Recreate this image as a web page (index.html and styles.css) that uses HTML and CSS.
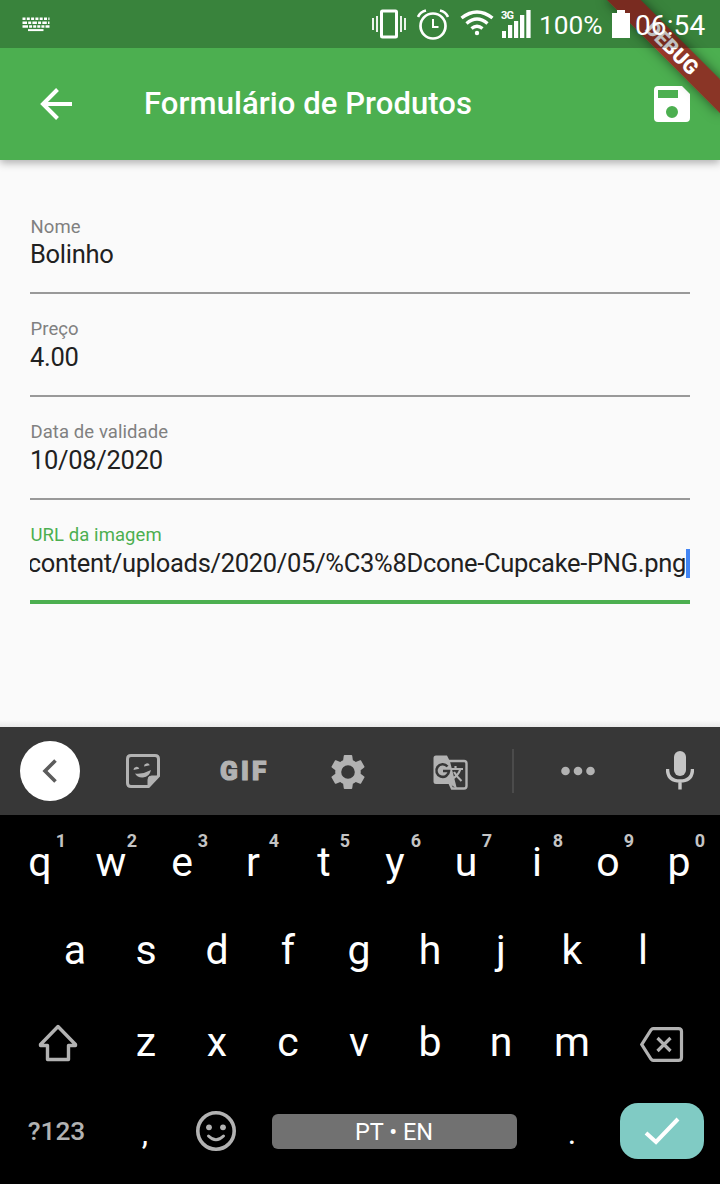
FILE: index.html
```html
<!DOCTYPE html>
<html lang="pt">
<head>
<meta charset="utf-8">
<title>Formulário de Produtos</title>
<link rel="stylesheet" href="styles.css">
</head>
<body>
<div class="screen">
  <header class="top">
    <div class="debug"><span>DEBUG</span></div>
    <div class="status">
      <svg class="s-kbd" width="28" height="15" viewBox="0 0 28 15" stroke="#fff" stroke-width="2.6" fill="none"><path d="M.5 1.8H27.500" stroke-dasharray="3 1.3"/><path d="M.5 5.700H27.500" stroke-dasharray="4.500 1.200 3 1.200"/><path d="M.5 9.500H27.500" stroke-dasharray="5.500 1.100 3 1.100 3 1.100 3 1.100 3 1.100 5.500"/><path d="M6 13.100H21.500" stroke-width="2"/></svg>
      <svg class="s-vib" width="34" height="30" viewBox="0 0 34 30" fill="none" stroke="#fff"><rect x="9.500" y="2" width="15" height="26" rx="1" stroke-width="3"/><path d="M1 9V21M5 7V23M29 7V23M33 9V21" stroke-width="1.800"/></svg>
      <svg class="s-alarm" width="32" height="31" viewBox="0 0 32 31" fill="none" stroke="#fff"><circle cx="16" cy="17" r="12.500" stroke-width="2.700"/><path d="M16 10V18H21.500" stroke-width="2"/><path d="M1 8Q3 3 9 1.500M31 8Q29 3 23 1.500" stroke-width="2.600"/></svg>
      <svg class="s-wifi" width="34" height="26" viewBox="0 0 34 26" fill="none" stroke="#fff" stroke-width="3.400"><path d="M1.500 8Q17-4 32.500 8M6.500 13.500Q17 4.500 27.500 13.500M11.500 18.500Q17 14 22.500 18.500"/><circle cx="17" cy="23" r="2.200" fill="#fff" stroke="none"/></svg>
      <div class="signal"><span>3G</span><svg width="29" height="28" viewBox="0 0 29 28" fill="#fff"><path d="M0 21h4v7H0zM6 15h4.200v13H6zM12 11h4.200v17H12zM18 5h4.300v23H18zM24.300 0h4.300v28h-4.300z"/></svg></div>
      <span class="pct">100%</span>
      <svg class="s-bat" width="18" height="28" viewBox="0 0 18 28"><path d="M5 0h8v3h5v25H0V3h5z" fill="#fff"/></svg>
      <span class="time">06:54</span>
    </div>
    <div class="appbar">
      <svg class="back" width="32" height="32" viewBox="0 0 32 32" fill="none" stroke="#fff" stroke-width="4"><path d="M32 16H3.500M17.500 1.500L3 16L17.500 30.500"/></svg>
      <h1>Formulário de Produtos</h1>
      <svg class="save" width="36" height="36" viewBox="0 0 36 36"><path fill="#fff" fill-rule="evenodd" d="M4 0H28L36 8V32Q36 36 32 36H4Q0 36 0 32V4Q0 0 4 0ZM4 4V12H24V4ZM18 20A6 6 0 1 0 18 32A6 6 0 1 0 18 20Z"/></svg>
    </div>
  </header>
  <main class="form">
    <div class="field"><label>Nome</label><div class="value">Bolinho</div></div>
    <div class="field"><label>Preço</label><div class="value">4.00</div></div>
    <div class="field"><label>Data de validade</label><div class="value">10/08/2020</div></div>
    <div class="field focus"><label>URL da imagem</label><div class="value"><span>content/uploads/2020/05/%C3%8Dcone-Cupcake-PNG.png</span><i class="caret"></i></div></div>
  </main>
  <div class="tools">
    <div class="collapse"><svg width="16" height="24" viewBox="0 0 16 24" fill="none" stroke="#5c5c5c" stroke-width="3.600"><path d="M13.500 1.500L3 12L13.500 22.500"/></svg></div>
    <svg class="t-sticker" width="34" height="34" viewBox="0 0 34 34" fill="none" stroke="#b2b2b2" stroke-width="3"><path d="M5 1.500H29Q32.500 1.500 32.500 5V22L22.500 32.500H5Q1.500 32.500 1.500 29V5Q1.500 1.500 5 1.500Z"/><path d="M22 32V25.500Q22 22 25.500 22H32L22.500 32Z" fill="#b2b2b2" stroke-width="1"/><g fill="#b2b2b2" stroke="none"><path d="M7.500 16A3 3 0 0 1 13.300 14.800ZM18 12.500A3 3 0 0 1 23.800 11.300Z"/><path d="M9 19.500Q17 20.500 25 16Q23.500 23 17 23.500Q11.500 24 9 19.500Z"/></g></svg>
    <span class="gif">GIF</span>
    <svg class="t-gear" width="34" height="34" viewBox="2 2 20 20"><path fill="#b2b2b2" d="M19.430 12.980c.04-.32.07-.64.07-.98s-.03-.66-.07-.98l2.110-1.650c.19-.15.24-.42.12-.64l-2-3.460c-.12-.22-.39-.3-.61-.22l-2.490 1c-.52-.4-1.080-.73-1.690-.98l-.38-2.650C14.460 2.180 14.250 2 14 2h-4c-.25 0-.46.18-.49.42l-.38 2.650c-.61.25-1.170.59-1.690.98l-2.490-1c-.23-.09-.49 0-.61.22l-2 3.460c-.13.22-.07.49.12.64l2.110 1.650c-.04.32-.07.65-.07.98s.03.66.07.98l-2.110 1.650c-.19.15-.24.42-.12.64l2 3.460c.12.22.39.3.61.22l2.490-1c.52.4 1.080.73 1.690.98l.38 2.650c.03.24.24.42.49.42h4c.25 0 .46-.18.49-.42l.38-2.650c.61-.25 1.170-.59 1.690-.98l2.490 1c.23.09.49 0 .61-.22l2-3.460c.12-.22.07-.49-.12-.64zM12 16a4 4 0 1 1 0-8a4 4 0 0 1 0 8z"/></svg>
    <svg class="t-trans" width="35" height="35" viewBox="0 0 35 35" fill="none"><path d="M3 .5H14L17 6.500L24 34L17 29H3Q.5 29 .5 26.500V3Q.5.500 3 .5Z" fill="#b2b2b2"/><path d="M16 6H31Q33.500 6 33.500 8.500V31Q33.500 33.500 31 33.500H19L16 27" stroke="#b2b2b2" stroke-width="2.400"/><path d="M14.500 11.500A6.300 6.300 0 1 0 16 16H10" stroke="#373737" stroke-width="2.600"/><path d="M18 14H30M22.500 11V14M27.500 14Q25 21 19 24M21 17Q24 22 28.500 26" stroke="#b2b2b2" stroke-width="2.200"/></svg>
    <i class="sep"></i>
    <svg class="t-dots" width="34" height="10" viewBox="0 0 34 10" fill="#b2b2b2"><circle cx="4.500" cy="5" r="4.300"/><circle cx="17" cy="5" r="4.300"/><circle cx="29.500" cy="5" r="4.300"/></svg>
    <svg class="t-mic" width="28" height="40" viewBox="0 0 28 40"><rect x="8" y="1" width="12" height="25" rx="6" fill="#c5c5c5"/><path d="M1.500 19Q1.500 31 14 31Q26.500 31 26.500 19M14 31V39.500" fill="none" stroke="#c5c5c5" stroke-width="3.400"/></svg>
  </div>
  <div class="keys">
    <div class="row r1"><b>q<sup>1</sup></b><b>w<sup>2</sup></b><b>e<sup>3</sup></b><b>r<sup>4</sup></b><b>t<sup>5</sup></b><b>y<sup>6</sup></b><b>u<sup>7</sup></b><b>i<sup>8</sup></b><b>o<sup>9</sup></b><b>p<sup>0</sup></b></div>
    <div class="row r2"><b>a</b><b>s</b><b>d</b><b>f</b><b>g</b><b>h</b><b>j</b><b>k</b><b>l</b></div>
    <div class="row r3">
      <b class="wide"><svg width="40" height="38" viewBox="0 0 40 38" fill="none" stroke="#b2b2b2" stroke-width="3.400" stroke-linejoin="round"><path d="M20 2.500L37.500 20.500V21.500H30.500V35.500H9.500V21.500H2.500V20.500Z"/></svg></b>
      <b>z</b><b>x</b><b>c</b><b>v</b><b>b</b><b>n</b><b>m</b>
      <b class="wide back-key"><svg width="44" height="35" viewBox="0 0 44 35" fill="none" stroke="#b2b2b2" stroke-width="3.200"><path d="M13 1.600H38.500Q41.500 1.600 41.500 4.500V30.500Q41.500 33.400 38.500 33.400H13Q12 33.400 11 32L1.800 17.500L11 3Q12 1.600 13 1.600Z"/><path d="M17.500 11L30.500 24M30.500 11L17.500 24"/></svg></b>
    </div>
    <div class="row r4">
      <b class="wide sym">?123</b><b class="punct">,</b>
      <b><svg width="40" height="40" viewBox="0 0 40 40" fill="none" stroke="#b2b2b2" stroke-width="3.600"><circle cx="20" cy="20" r="18.200"/><path d="M12.500 25Q20 32.500 27.500 25" stroke-width="3" stroke-linecap="round"/><g fill="#b2b2b2" stroke="none"><circle cx="13" cy="16.300" r="2.900"/><circle cx="27" cy="16.300" r="2.900"/></g></svg></b>
      <span class="space">PT • EN</span><b class="punct">.</b>
      <span class="enter"><svg width="36" height="28" viewBox="0 0 36 28" fill="none" stroke="#fff" stroke-width="4"><path d="M2 16L12 25L34 2"/></svg></span>
    </div>
  </div>
</div>
</body>
</html>
```
FILE: styles.css
```css
* { box-sizing: border-box; }
body { margin: 0; font-family: Roboto, sans-serif; }
svg { display: block; flex: none; }
.screen { width: 720px; height: 1184px; display: flex; flex-direction: column; background: #fafafa; overflow: hidden; }

.top { position: relative; height: 160px; background: #4caf50; box-shadow: 0 3px 8px rgba(0,0,0,.3); }
.debug { position: absolute; inset: 0; overflow: hidden; height: 160px; }
.debug span { position: absolute; left: 640px; top: 56px; width: 160px; height: 24px; line-height: 24px; text-align: center; transform-origin: 80px -56px; transform: rotate(45deg); background: linear-gradient(90deg, #a23a2b 40%, #8a3526 62%); box-shadow: 0 0 12px rgba(0,0,0,.5); color: #fff; font-size: 20.4px; font-weight: 900; }
.status { position: relative; height: 48px; display: flex; align-items: flex-start; background: rgba(0,0,0,.25); color: #fff; }
.s-kbd { margin: 17px 0 0 22px; }
.s-vib { margin: 9px 0 0 322px; }
.s-alarm { margin: 9px 0 0 11px; }
.s-wifi { margin: 10px 0 0 11px; }
.signal { position: relative; margin: 10px 0 0 8px; }
.signal span { position: absolute; left: -1px; top: 0; font-size: 11px; line-height: 12px; font-weight: 700; letter-spacing: -.8px; }
.pct { margin: 10px 0 0 8px; width: 64px; font-size: 26.300px; line-height: 30px; }
.s-bat { margin: 10px 0 0 9px; }
.time { margin: 11px 0 0 5px; font-size: 28px; line-height: 30px; white-space: nowrap; letter-spacing: .1px; }
.appbar { height: 112px; padding: 0 30px 0 40px; display: flex; align-items: center; }
.appbar h1 { flex: 1; margin: 0 0 0 72px; color: #fff; font-size: 31px; line-height: 40px; font-weight: 500; letter-spacing: .08px; }

.form { flex: none; height: 567px; padding: 51px 30px 0; background: linear-gradient(#fafafa, #fafafa 560px, #e9e9e9); }
.field { height: 103px; display: flex; flex-direction: column; }
.field label { margin: 5px 0 0 .5px; font-size: 18.500px; line-height: 22px; color: #808080; letter-spacing: .08px; }
.field + .field label { margin-top: 4px; margin-bottom: 1px; }
.value { display: flex; height: 56px; padding-top: 1px; border-bottom: 2px solid #999; font-size: 25.500px; line-height: 30px; color: #212121; overflow: hidden; white-space: nowrap; letter-spacing: -.3px; }
.focus label { color: #4caf50; }
.focus .value { height: 57px; justify-content: flex-end; border-bottom: 4px solid #4caf50; }
.caret { flex: none; width: 4px; height: 29px; margin-top: 1px; background: #4285f4; }

.tools { flex: none; height: 88px; background: #373737; display: flex; align-items: center; }
.collapse { width: 60px; height: 60px; margin-left: 20px; border-radius: 50%; background: #fff; display: flex; align-items: center; justify-content: center; }
.t-sticker { margin-left: 46px; }
.gif { margin-left: 60px; width: 48px; color: #b2b2b2; font: 900 26px/30px Roboto, sans-serif; letter-spacing: 3.200px; -webkit-text-stroke: 1.200px #b2b2b2; }
.t-gear { margin-left: 63px; margin-top: 2px; }
.t-trans { margin-left: 68px; margin-top: 3px; }
.sep { width: 2px; height: 44px; margin-left: 44px; background: #4b4b4b; }
.t-dots { margin-left: 47px; }
.t-mic { margin-left: 71px; margin-bottom: 2px; }

.keys { flex: 1; background: #000; color: #fff; }
.row { display: flex; align-items: center; padding: 0 4.500px; }
.row b { position: relative; flex: none; width: 71px; display: flex; justify-content: center; font-size: 41px; line-height: 48px; font-weight: 400; }
.row .wide { width: 106px; }
.r1 { height: 92px; padding-top: 1px; }
.r2 { height: 86px; padding-left: 39.500px; }
.r3 { height: 96px; padding-left: 4.500px; padding-top: 2px; }
.r3 svg { margin-top: 2px; }
.r3 .back-key svg { margin: 4px 0 0 2px; }
.r4 { height: 84px; padding-left: 3.500px; }
.row sup { position: absolute; left: 46.500px; width: 20px; top: -8px; text-align: center; font-size: 18px; line-height: 22px; font-weight: 700; color: #c4c4c4; }
.row .sym { font-size: 26.300px; font-weight: 500; color: #b2b2b2; }
.row .punct { font-size: 32px; padding-top: 3px; }
.space { flex: none; width: 245px; height: 35px; margin: 0 20px; border-radius: 6px; background: #717171; text-align: center; font-size: 23.500px; line-height: 37px; }
.enter { flex: none; width: 84px; height: 56px; border-radius: 18px; background: #80cbc4; display: flex; align-items: center; justify-content: center; margin-left: 12px; }
```
